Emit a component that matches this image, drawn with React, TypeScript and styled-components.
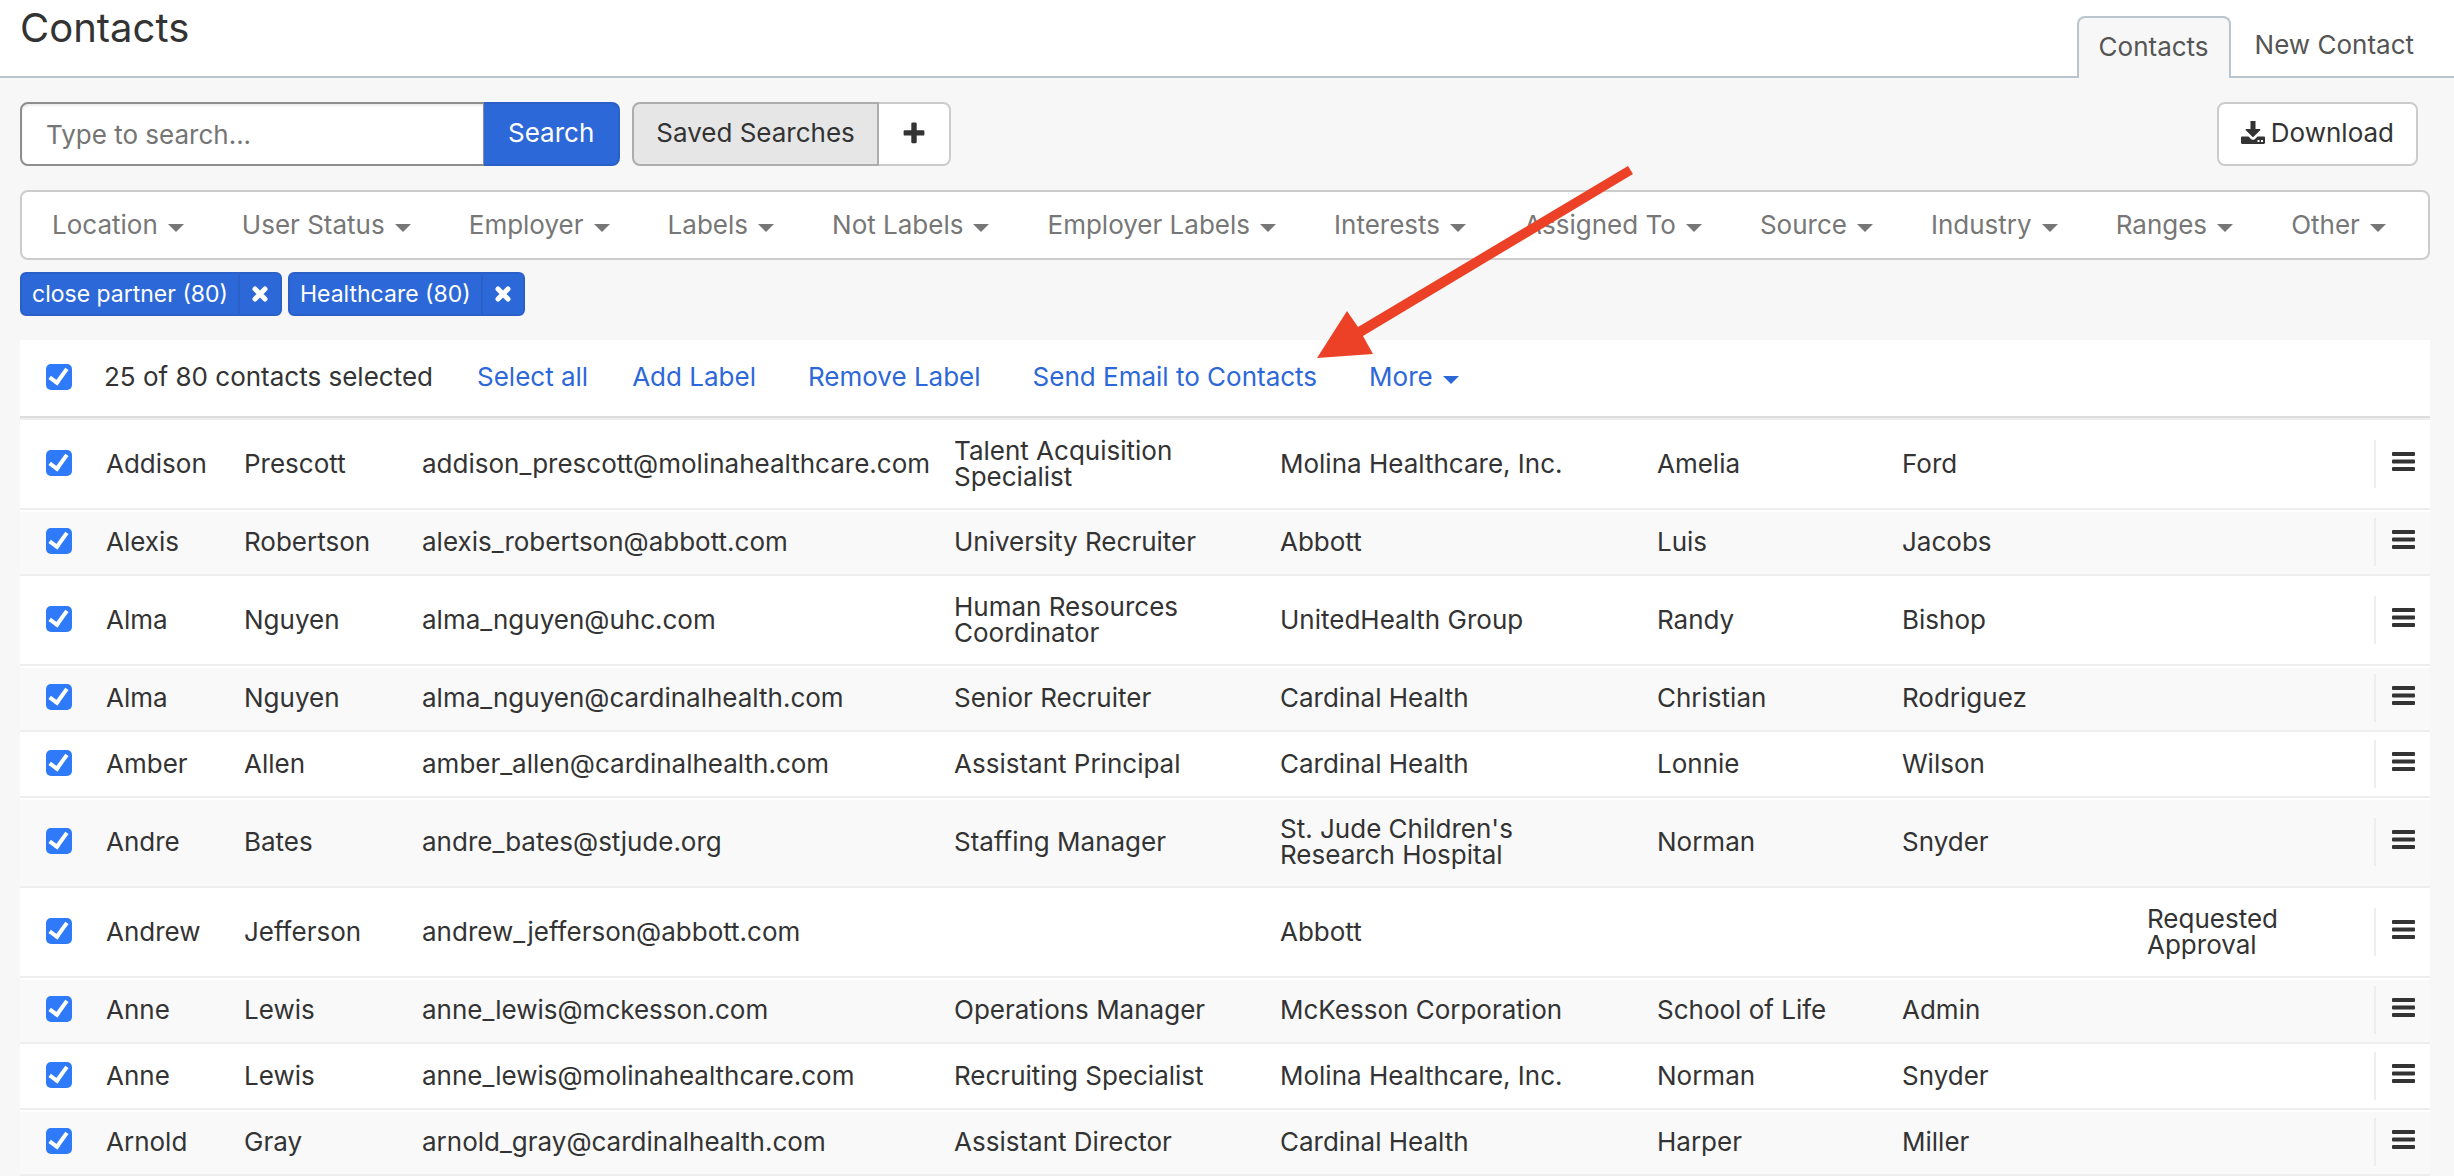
import React from 'react';
import styled, { createGlobalStyle, css } from 'styled-components';

const INK = '#333333';
const BLUE = '#2d68d8';
const PAGE = '#f7f7f7';

const GlobalStyle = createGlobalStyle`
  *, *::before, *::after { box-sizing: border-box; }
  html { background: ${PAGE}; overflow: hidden; }
  body { margin: 0; font-family: Inter, "Liberation Sans", sans-serif; font-size: 26px; line-height: 40px; color: ${INK}; }
  button, input { font: inherit; color: inherit; margin: 0; }
  a { color: inherit; text-decoration: none; }
`;

const Page = styled.div`
  position: relative;
  min-height: 100vh;
  background: ${PAGE};
`;

const Header = styled.header`
  display: flex;
  justify-content: space-between;
  align-items: stretch;
  height: 78px;
  padding: 0 20px;
  background: #ffffff;
  border-bottom: 2px solid #b9c4cc;
`;

const Title = styled.h1`
  margin: 0;
  padding-top: 8px;
  font-size: 40px;
  line-height: 40px;
  font-weight: 400;
`;

const Tabs = styled.nav`
  display: flex;
  align-items: flex-end;
`;

const Tab = styled.a<{ $active?: boolean }>`
  height: 62px;
  padding: 11px 20px 0 24px;
  color: #555555;
  ${(p) =>
    p.$active &&
    css`
      margin-bottom: -2px;
      padding: 9px 20px 0;
      background: ${PAGE};
      border: 2px solid #b9c4cc;
      border-bottom: 0;
      border-radius: 8px 8px 0 0;
    `}
`;

const Main = styled.main`
  padding: 24px 24px 0 20px;
`;

const Toolbar = styled.div`
  display: flex;
  justify-content: space-between;
  padding-right: 12px;
  margin-bottom: 24px;
`;

const ToolGroup = styled.div`
  display: flex;
  gap: 12px;
`;

const Joined = styled.div`
  display: flex;
`;

const SearchInput = styled.input`
  width: 464px;
  height: 64px;
  padding: 0 24px;
  border: 2px solid #8e8e8e;
  border-right-width: 1px;
  border-radius: 8px 0 0 8px;
  background: #ffffff;
  box-shadow: inset 0 2px 2px rgba(0, 0, 0, 0.08);
  &::placeholder { color: #757575; opacity: 1; }
`;

const Button = styled.button<{ $kind?: 'primary' | 'pressed'; $side?: 'left' | 'right' }>`
  display: flex;
  align-items: center;
  justify-content: center;
  gap: 6px;
  height: 64px;
  padding: 0 22px 2px;
  border: 2px solid #cccccc;
  border-radius: 8px;
  background: #ffffff;
  ${(p) => p.$kind === 'primary' && css`padding: 0 24px 2px; color: #ffffff; background: ${BLUE}; border-color: #2a60c8;`}
  ${(p) => p.$kind === 'pressed' && css`background: #e6e6e6; border-color: #adadad;`}
  ${(p) => p.$side === 'left' && css`border-top-right-radius: 0; border-bottom-right-radius: 0;`}
  ${(p) => p.$side === 'right' && css`border-top-left-radius: 0; border-bottom-left-radius: 0; border-left-width: 0;`}
`;

const FilterBar = styled.div`
  display: flex;
  align-items: center;
  justify-content: space-between;
  height: 70px;
  padding: 0 42px 0 30px;
  border: 2px solid #cccccc;
  border-radius: 8px;
  background: #ffffff;
`;

const MenuButton = styled.button<{ $color: string }>`
  display: flex;
  align-items: center;
  gap: 10px;
  padding: 0;
  border: 0;
  background: none;
  color: ${(p) => p.$color};
  white-space: nowrap;
  &::after {
    content: '';
    margin-top: 6px;
    border-top: 8px solid;
    border-left: 8px solid transparent;
    border-right: 8px solid transparent;
  }
`;

const Tags = styled.div`
  display: flex;
  gap: 6px;
  padding: 12px 0 24px;
`;

const Tag = styled.div`
  display: flex;
  height: 44px;
  border: 2px solid #2a60c8;
  border-radius: 6px;
  background: ${BLUE};
  color: #ffffff;
  font-size: 23px;
  white-space: nowrap;
`;

const TagText = styled.span`
  padding: 0 10px;
`;

const TagRemove = styled.button`
  display: flex;
  align-items: center;
  justify-content: center;
  width: 42px;
  padding: 0;
  border: 0;
  border-left: 2px solid #2a60c8;
  background: none;
`;

const Panel = styled.section`
  background: #ffffff;
`;

const ActionBar = styled.div`
  display: flex;
  align-items: center;
  gap: 52px;
  height: 80px;
  padding: 0 26px 4px;
  border-bottom: 2px solid #eeeeee;
  box-shadow: inset 0 -2px 0 #dddddd;
  white-space: nowrap;
`;

const Selection = styled.div`
  display: flex;
  align-items: center;
  gap: 44px;
`;

const SelectAll = styled.label`
  display: flex;
  align-items: center;
  gap: 32px;
`;

const Action = styled.a`
  color: ${BLUE};
`;

const Checkbox = styled.input.attrs({ type: 'checkbox' })`
  appearance: none;
  display: block;
  flex: none;
  width: 26px;
  height: 26px;
  border-radius: 5px;
  background: #ffffff;
  border: 2px solid #999999;
  &:checked {
    border: 0;
    background: #2f7af8;
  }
  &:checked::after {
    content: '';
    display: block;
    width: 11px;
    height: 19px;
    margin-left: 7px;
    border: solid #ffffff;
    border-width: 0 4px 4px 0;
    transform: translateY(1px) rotate(36deg);
  }
`;

const Table = styled.table`
  width: 100%;
  table-layout: fixed;
  border-collapse: separate;
  border-spacing: 0;
  line-height: 26px;
`;

const Row = styled.tr`
  background: #ffffff;
  &:nth-child(even) { background: #f9f9f9; }
  &:nth-child(even) > td { box-shadow: inset 0 2px 0 #ffffff; }
`;

const Cell = styled.td`
  height: 66px;
  padding: 18px 24px 18px 10px;
  border-bottom: 2px solid #eeeeee;
  vertical-align: middle;
`;

const CheckCell = styled(Cell)`
  padding: 0 0 2px 26px;
`;

const MenuCell = styled(Cell)`
  padding: 0;
`;

const RowMenu = styled.button`
  display: flex;
  align-items: center;
  height: 48px;
  margin-left: 2px;
  padding: 0 14px 4px 16px;
  border: 0;
  border-left: 2px solid #eeeeee;
  background: none;
`;

const Arrow = styled.svg`
  position: absolute;
  left: 1317px;
  top: 165px;
  pointer-events: none;
`;

const filters = ['Location', 'User Status', 'Employer', 'Labels', 'Not Labels', 'Employer Labels', 'Interests', 'Assigned To', 'Source', 'Industry', 'Ranges', 'Other'];
const tags = ['close partner (80)', 'Healthcare (80)'];
const columnWidths = [76, 138, 178, 532, 326, 377, 245, 245, 235, 58];

const contacts = [
  ['Addison', 'Prescott', 'addison_prescott@molinahealthcare.com', 'Talent Acquisition Specialist', 'Molina Healthcare, Inc.', 'Amelia', 'Ford', ''],
  ['Alexis', 'Robertson', 'alexis_robertson@abbott.com', 'University Recruiter', 'Abbott', 'Luis', 'Jacobs', ''],
  ['Alma', 'Nguyen', 'alma_nguyen@uhc.com', 'Human Resources Coordinator', 'UnitedHealth Group', 'Randy', 'Bishop', ''],
  ['Alma', 'Nguyen', 'alma_nguyen@cardinalhealth.com', 'Senior Recruiter', 'Cardinal Health', 'Christian', 'Rodriguez', ''],
  ['Amber', 'Allen', 'amber_allen@cardinalhealth.com', 'Assistant Principal', 'Cardinal Health', 'Lonnie', 'Wilson', ''],
  ['Andre', 'Bates', 'andre_bates@stjude.org', 'Staffing Manager', "St. Jude Children's Research Hospital", 'Norman', 'Snyder', ''],
  ['Andrew', 'Jefferson', 'andrew_jefferson@abbott.com', '', 'Abbott', '', '', 'Requested Approval'],
  ['Anne', 'Lewis', 'anne_lewis@mckesson.com', 'Operations Manager', 'McKesson Corporation', 'School of Life', 'Admin', ''],
  ['Anne', 'Lewis', 'anne_lewis@molinahealthcare.com', 'Recruiting Specialist', 'Molina Healthcare, Inc.', 'Norman', 'Snyder', ''],
  ['Arnold', 'Gray', 'arnold_gray@cardinalhealth.com', 'Assistant Director', 'Cardinal Health', 'Harper', 'Miller', ''],
];

const PlusIcon = () => (
  <svg width="26" height="22" viewBox="0 0 26 22" fill="currentColor" aria-hidden="true">
    <path d="M11.500 .5h3a1.200 1.200 0 0 1 1.200 1.200V8.200h6.500a1.200 1.200 0 0 1 1.200 1.200v3a1.200 1.200 0 0 1-1.200 1.200H15.700v6.500a1.200 1.200 0 0 1-1.200 1.200h-3a1.200 1.200 0 0 1-1.200-1.200V13.600H3.800a1.200 1.200 0 0 1-1.200-1.200v-3a1.200 1.200 0 0 1 1.200-1.200h6.500V1.700A1.200 1.200 0 0 1 11.500.5z" />
  </svg>
);

const CrossIcon = () => (
  <svg width="18" height="18" viewBox="0 0 18 18" fill="none" stroke="currentColor" strokeWidth="5" strokeLinecap="round" aria-hidden="true">
    <path d="M4 4l10 10M14 4L4 14" />
  </svg>
);

const DownloadIcon = () => (
  <svg width="24" height="24" viewBox="0 0 24 24" fill="currentColor" aria-hidden="true">
    <path d="M9.500 0h5v8h4.200c.7 0 1 .8.500 1.300l-6.600 6.500a.9.900 0 0 1-1.200 0L4.800 9.300C4.300 8.800 4.600 8 5.300 8h4.200z" />
    <path fillRule="evenodd" d="M1.200 15.500h6.300l2.500 2.400a3 3 0 0 0 4 0l2.500-2.400h6.300c.7 0 1.200.5 1.200 1.200v5.100c0 .7-.5 1.200-1.200 1.200H1.200C.5 23 0 22.500 0 21.800v-5.100c0-.7.500-1.200 1.200-1.200zM16.500 19v2h2v-2zM20 19v2h2v-2z" />
  </svg>
);

const BarsIcon = () => (
  <svg width="24" height="20" viewBox="0 0 24 20" fill="currentColor" aria-hidden="true">
    <rect x="0" y="0" width="23" height="4" rx="1" />
    <rect x="0" y="7.500" width="23" height="4" rx="1" />
    <rect x="0" y="15" width="23" height="4" rx="1" />
  </svg>
);

export default function App() {
  return (
    <Page>
      <GlobalStyle />
      <Header>
        <Title>Contacts</Title>
        <Tabs>
          <Tab href="#contacts" $active>Contacts</Tab>
          <Tab href="#new">New Contact</Tab>
        </Tabs>
      </Header>
      <Main>
        <Toolbar>
          <ToolGroup>
            <Joined>
              <SearchInput type="text" placeholder="Type to search..." aria-label="Search contacts" />
              <Button $kind="primary" $side="right">Search</Button>
            </Joined>
            <Joined>
              <Button $kind="pressed" $side="left">Saved Searches</Button>
              <Button $side="right" aria-label="Add search"><PlusIcon /></Button>
            </Joined>
          </ToolGroup>
          <Button><DownloadIcon />Download</Button>
        </Toolbar>
        <FilterBar>
          {filters.map((f) => <MenuButton key={f} $color="#777777">{f}</MenuButton>)}
        </FilterBar>
        <Tags>
          {tags.map((t) => (
            <Tag key={t}>
              <TagText>{t}</TagText>
              <TagRemove aria-label={`Remove ${t}`}><CrossIcon /></TagRemove>
            </Tag>
          ))}
        </Tags>
        <Panel>
          <ActionBar>
            <Selection>
              <SelectAll>
                <Checkbox defaultChecked />
                25 of 80 contacts selected
              </SelectAll>
              <Action href="#select-all">Select all</Action>
              <Action href="#add-label">Add Label</Action>
            </Selection>
            <Action href="#remove-label">Remove Label</Action>
            <Action href="#send-email">Send Email to Contacts</Action>
            <MenuButton $color={BLUE}>More</MenuButton>
          </ActionBar>
          <Table>
            <colgroup>
              {columnWidths.map((w, i) => <col key={i} style={{ width: w }} />)}
            </colgroup>
            <tbody>
              {contacts.map((row, r) => (
                <Row key={r}>
                  <CheckCell><Checkbox defaultChecked aria-label={`Select ${row[0]} ${row[1]}`} /></CheckCell>
                  {row.map((value, c) => <Cell key={c}>{value}</Cell>)}
                  <MenuCell><RowMenu aria-label="Row menu"><BarsIcon /></RowMenu></MenuCell>
                </Row>
              ))}
            </tbody>
          </Table>
        </Panel>
      </Main>
      <Arrow width="318" height="194" viewBox="0 0 318 194" fill="#ec4126" aria-hidden="true">
        <path d="M0 193L30 146L41 162L311 1L316 9L46 171L56 189Z" />
      </Arrow>
    </Page>
  );
}
